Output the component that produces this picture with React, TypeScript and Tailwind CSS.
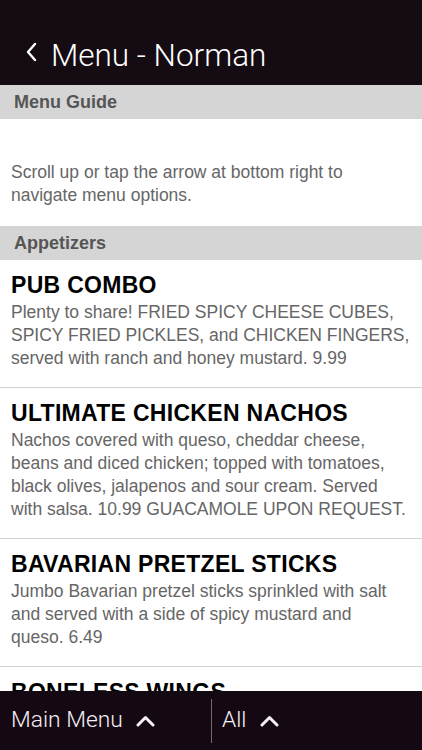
import React from 'react';

const items = [
  {
    name: 'PUB COMBO',
    lines: [
      'Plenty to share! FRIED SPICY CHEESE CUBES,',
      'SPICY FRIED PICKLES, and CHICKEN FINGERS,',
      'served with ranch and honey mustard. 9.99',
    ],
  },
  {
    name: 'ULTIMATE CHICKEN NACHOS',
    lines: [
      'Nachos covered with queso, cheddar cheese,',
      'beans and diced chicken; topped with tomatoes,',
      'black olives, jalapenos and sour cream. Served',
      'with salsa. 10.99 GUACAMOLE UPON REQUEST.',
    ],
  },
  {
    name: 'BAVARIAN PRETZEL STICKS',
    lines: [
      'Jumbo Bavarian pretzel sticks sprinkled with salt',
      'and served with a side of spicy mustard and',
      'queso. 6.49',
    ],
  },
  {
    name: 'BONELESS WINGS',
    lines: [],
  },
];

const ChevronUp = () => (
  <svg width="19" height="12" viewBox="0 0 19 12" className="ml-[13px]">
    <path d="M2 10 L9.5 2.5 L17 10" fill="none" stroke="#f4f0f3" strokeWidth="3" strokeLinecap="round" strokeLinejoin="round" />
  </svg>
);

const SectionBar = ({ title }: { title: string }) => (
  <div className="h-[34px] bg-[#d5d5d5] flex items-center pl-[14px]">
    <span className="text-[18px] font-semibold text-[#555]">{title}</span>
  </div>
);

const App = () => {
  return (
    <div className="w-[422px] h-[750px] bg-white relative overflow-hidden font-['Liberation_Sans',Arial,sans-serif]">
      {/* Header */}
      <div className="h-[85px] bg-[#150b13] flex items-end pb-[11px] pl-[25px]">
        <svg width="14" height="20" viewBox="0 0 14 20" className="mb-[12px]">
          <path d="M10 2 L3 10 L10 18" fill="none" stroke="#fff" strokeWidth="2.4" strokeLinecap="round" strokeLinejoin="round" />
        </svg>
        <span className="ml-[12px] text-[31.5px] leading-[37px] font-light text-white font-['Roboto',sans-serif]">Menu - Norman</span>
      </div>

      <SectionBar title="Menu Guide" />
      <div className="h-[107px] pt-[42px] px-[11px]">
        <p className="text-[17.5px] leading-[23px] text-[#666]">
          Scroll up or tap the arrow at bottom right to
          <br />
          navigate menu options.
        </p>
      </div>

      <SectionBar title="Appetizers" />
      {items.map((item, i) => (
        <div key={item.name} className={i < items.length - 1 ? 'border-b border-[#d2d2d2]' : ''}>
          <div className="pt-[12px] pb-[17px] px-[11px]">
            <h3 className="text-[23px] leading-[26px] font-bold tracking-[0.3px] text-black">{item.name}</h3>
            {item.lines.length > 0 && (
              <p className="mt-[3px] text-[17.5px] leading-[23px] text-[#666] whitespace-nowrap">
                {item.lines.map((l, j) => (
                  <React.Fragment key={j}>
                    {j > 0 && <br />}
                    {l}
                  </React.Fragment>
                ))}
              </p>
            )}
          </div>
        </div>
      ))}

      {/* Footer */}
      <div className="absolute left-0 right-0 bottom-0 h-[59px] bg-[#140812] flex items-center">
        <div className="w-[211px] flex items-center pl-[11px]">
          <span className="text-[22.8px] font-light text-[#f4f0f3] font-['Roboto',sans-serif]">Main Menu</span>
          <ChevronUp />
        </div>
        <div className="w-px h-[44px] bg-[#6f6a6e]" />
        <div className="flex items-center pl-[10px]">
          <span className="text-[22.8px] font-light text-[#f4f0f3] font-['Roboto',sans-serif]">All</span>
          <ChevronUp />
        </div>
      </div>
    </div>
  );
};

export default App;
